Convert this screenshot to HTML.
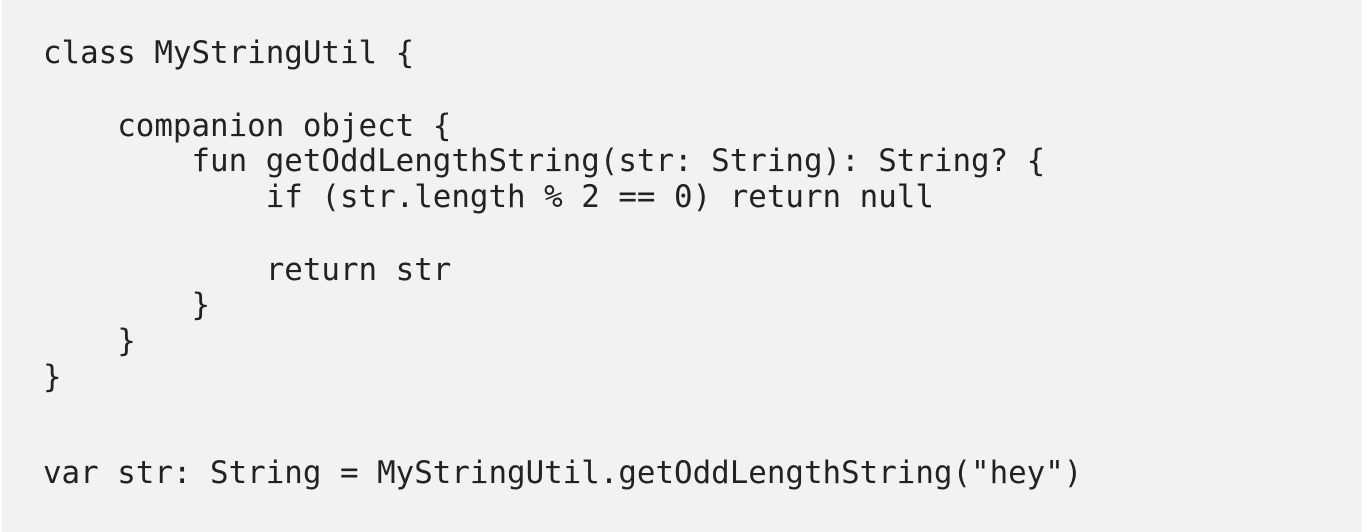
<!DOCTYPE html>
<html><head><style>
html,body{margin:0;padding:0;background:#fff;width:1370px;height:532px;overflow:hidden}
.bg{position:absolute;left:2px;top:0;width:1360px;height:532px;background:#f2f2f2}
.l{position:absolute;left:43px;font-family:"DejaVu Sans Mono","Liberation Mono",monospace;font-size:30.84px;line-height:36px;color:#222;white-space:pre}
</style></head><body>
<div class="bg"></div>
<div class="l" style="top:35px">class MyStringUtil {</div>
<div class="l" style="top:108px">    companion object {</div>
<div class="l" style="top:143px">        fun getOddLengthString(str: String): String? {</div>
<div class="l" style="top:179px">            if (str.length % 2 == 0) return null</div>
<div class="l" style="top:252px">            return str</div>
<div class="l" style="top:287px">        }</div>
<div class="l" style="top:323px">    }</div>
<div class="l" style="top:359px">}</div>
<div class="l" style="top:455px">var str: String = MyStringUtil.getOddLengthString("hey")</div>
</body></html>
